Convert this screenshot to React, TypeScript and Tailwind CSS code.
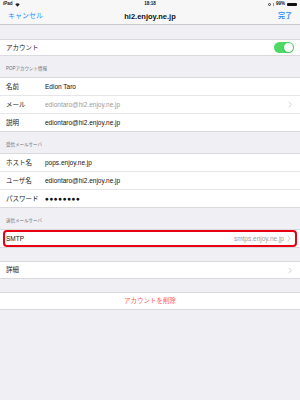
import React from "react";

const font = { fontFamily: '"Liberation Sans", "Noto Sans CJK JP", sans-serif' };

function Chevron() {
    return (
        <svg viewBox="0 0 6 10" width="4" height="7" className="shrink-0">
            <path d="M1 1 L5 5 L1 9" fill="none" stroke="#c7c7cc" strokeWidth="1.3" />
        </svg>
    );
}

function SectionHeader({ title, h = "h-[22px]" }: { title: string; h?: string }) {
    return (
        <div className={`${h} flex items-end pl-[6px] pb-[4px] text-[4.5px] text-[#6d6d72] border-b border-[#d9d9de]`}>
            {title}
        </div>
    );
}

function Row({ label, value, muted, chevron, last }: { label: string; value: React.ReactNode; muted?: boolean; chevron?: boolean; last?: boolean }) {
    return (
        <div className={`h-[18px] flex items-center bg-white pl-[6px] pr-[8px] text-[6.5px] ${last ? "border-b border-[#d9d9de]" : "border-b border-[#e5e5ea]"}`}>
            <span className="w-[39px] text-[#222]">{label}</span>
            <span className={`flex-1 ${muted ? "text-[#9a9aa0]" : "text-[#111]"}`}>{value}</span>
            {chevron && <Chevron />}
        </div>
    );
}

export default function App() {
    return (
        <div className="w-[300px] h-[400px] bg-[#efeff4] overflow-hidden" style={font}>
            {/* status bar */}
            <div className="h-[9px] bg-[#f7f7f7] flex items-center justify-between px-[3px] text-[4.5px] text-[#111]">
                <div className="flex items-center gap-[2px] w-[60px]">
                    <span className="font-bold">iPad</span>
                    <svg viewBox="0 0 10 8" width="5" height="4">
                        <path d="M5 7.5 L0.5 2.5 A6.5 6.5 0 0 1 9.5 2.5 Z" fill="#222" />
                    </svg>
                </div>
                <span className="font-bold">18:18</span>
                <div className="flex items-center justify-end gap-[2px] w-[60px]">
                    <span className="w-[3px] h-[3px] rounded-full border border-[#333]" />
                    <span className="w-[1px] h-[3px] bg-[#999]" />
                    <span className="font-bold">99%</span>
                    <span className="w-[10px] h-[3.5px] bg-[#111] rounded-[1px]" />
                </div>
            </div>
            {/* nav */}
            <div className="h-[16px] bg-[#f7f7f7] border-b border-[#c8c7cc] flex items-center justify-between px-[8px] text-[7px]">
                <span className="text-[#2b8cff] w-[40px]">キャンセル</span>
                <span className="font-bold text-[#111] text-[7.5px]">hi2.enjoy.ne.jp</span>
                <span className="text-[#2b8cff] font-bold w-[40px] text-right">完了</span>
            </div>
            <div className="h-[15px] border-b border-[#d9d9de]" />
            {/* account toggle */}
            <div className="h-[16px] bg-white flex items-center justify-between pl-[6px] pr-[6px] text-[6.5px] border-b border-[#d9d9de]">
                <span className="text-[#222]">アカウント</span>
                <div className="w-[20px] h-[11px] rounded-full bg-[#4cd964] flex items-center justify-end pr-[1px]">
                    <div className="w-[9px] h-[9px] rounded-full bg-white shadow-sm" />
                </div>
            </div>

            <SectionHeader title="POPアカウント情報" />
            <Row label="名前" value="Edion Taro" />
            <Row label="メール" value="ediontaro@hi2.enjoy.ne.jp" muted chevron />
            <Row label="説明" value="ediontaro@hi2.enjoy.ne.jp" last />

            <SectionHeader title="受信メールサーバ" />
            <Row label="ホスト名" value="pops.enjoy.ne.jp" />
            <Row label="ユーザ名" value="ediontaro@hi2.enjoy.ne.jp" />
            <Row label="パスワード" value={<span className="tracking-[0.5px]">●●●●●●●●</span>} last />

            <SectionHeader title="送信メールサーバ" />
            <div className="h-[18px] bg-white border-b border-[#d9d9de] px-[3px]">
                <div className="h-full border-2 border-[#e60012] rounded-[4px] flex items-center pl-[1px] pr-[4px] text-[6.5px]">
                    <span className="flex-1 text-[#111]">SMTP</span>
                    <span className="text-[#9a9aa0] mr-[3px]">smtps.enjoy.ne.jp</span>
                    <Chevron />
                </div>
            </div>

            <div className="h-[14px] border-b border-[#d9d9de]" />
            <div className="h-[17px] bg-white flex items-center pl-[6px] pr-[8px] text-[6.5px] border-b border-[#d9d9de]">
                <span className="flex-1 text-[#222]">詳細</span>
                <Chevron />
            </div>

            <div className="h-[14px] border-b border-[#d9d9de]" />
            <div className="h-[17px] bg-white flex items-center justify-center text-[6.5px] text-[#ff5a55] border-b border-[#d9d9de]">
                アカウントを削除
            </div>
        </div>
    );
}
